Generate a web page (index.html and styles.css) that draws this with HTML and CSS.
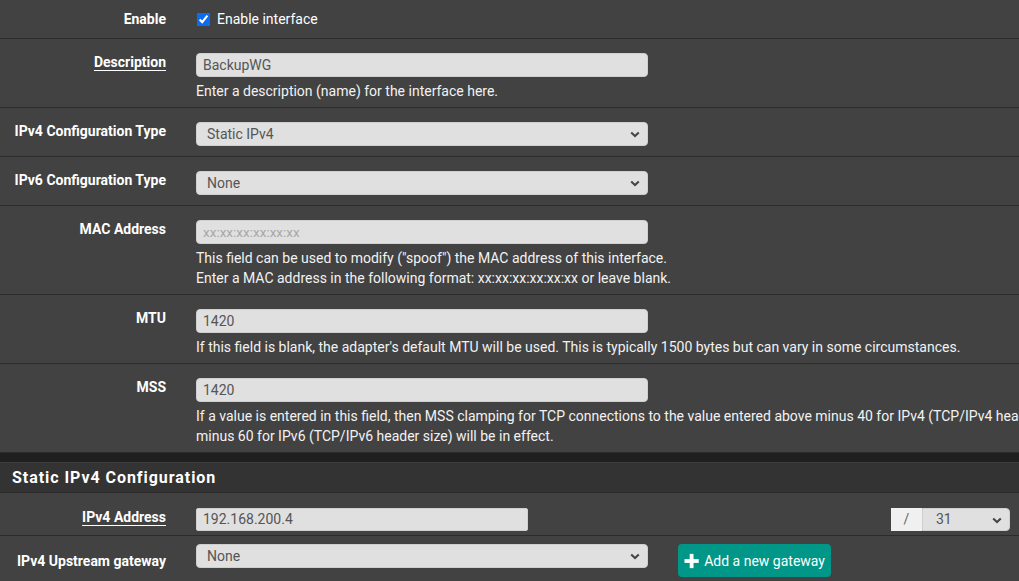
FILE: index.html
```html
<!DOCTYPE html>
<html>
<head>
<meta charset="utf-8">
<link rel="stylesheet" href="styles.css">
</head>
<body>
<div class="panel">
  <div class="row row-enable">
    <div class="lbl">Enable</div>
    <div class="ctl check-line">
      <input type="checkbox" class="chk" checked>
      <span>Enable interface</span>
    </div>
  </div>
  <div class="row">
    <div class="lbl"><span class="ul">Description</span></div>
    <div class="ctl">
      <div class="field">BackupWG</div>
      <div class="help">Enter a description (name) for the interface here.</div>
    </div>
  </div>
  <div class="row">
    <div class="lbl">IPv4 Configuration Type</div>
    <div class="ctl">
      <div class="field sel">Static IPv4
        <svg class="chev" width="10" height="7" viewBox="0 0 10 7"><path d="M1.2 1.4 L5 5 L8.8 1.4" fill="none" stroke="#444" stroke-width="2"/></svg>
      </div>
    </div>
  </div>
  <div class="row">
    <div class="lbl">IPv6 Configuration Type</div>
    <div class="ctl">
      <div class="field sel">None
        <svg class="chev" width="10" height="7" viewBox="0 0 10 7"><path d="M1.2 1.4 L5 5 L8.8 1.4" fill="none" stroke="#444" stroke-width="2"/></svg>
      </div>
    </div>
  </div>
  <div class="row">
    <div class="lbl">MAC Address</div>
    <div class="ctl">
      <div class="field placeholder">xx:xx:xx:xx:xx:xx</div>
      <div class="help">This field can be used to modify ("spoof") the MAC address of this interface.<br>Enter a MAC address in the following format: xx:xx:xx:xx:xx:xx or leave blank.</div>
    </div>
  </div>
  <div class="row">
    <div class="lbl">MTU</div>
    <div class="ctl">
      <div class="field">1420</div>
      <div class="help">If this field is blank, the adapter's default MTU will be used. This is typically 1500 bytes but can vary in some circumstances.</div>
    </div>
  </div>
  <div class="row">
    <div class="lbl">MSS</div>
    <div class="ctl">
      <div class="field">1420</div>
      <div class="help help-clip">If a value is entered in this field, then MSS clamping for TCP connections to the value entered above minus 40 for IPv4 (TCP/IPv4 header size) and<br>minus 60 for IPv6 (TCP/IPv6 header size) will be in effect.</div>
    </div>
  </div>
</div>
<div class="gap"></div>
<div class="panel">
  <div class="heading">Static IPv4 Configuration</div>
  <div class="row row-addr">
    <div class="lbl"><span class="ul">IPv4 Address</span></div>
    <div class="ctl addr-line">
      <div class="field addr">192.168.200.4</div>
      <div class="cidr">
        <div class="addon">/</div>
        <div class="field sel mask">31
          <svg class="chev" width="10" height="7" viewBox="0 0 10 7"><path d="M1.2 1.4 L5 5 L8.8 1.4" fill="none" stroke="#444" stroke-width="2"/></svg>
        </div>
      </div>
    </div>
  </div>
  <div class="row row-gw">
    <div class="lbl">IPv4 Upstream gateway</div>
    <div class="ctl gw-line">
      <div class="field sel">None
        <svg class="chev" width="10" height="7" viewBox="0 0 10 7"><path d="M1.2 1.4 L5 5 L8.8 1.4" fill="none" stroke="#444" stroke-width="2"/></svg>
      </div>
      <button class="btn"><svg width="16" height="16" viewBox="0 0 16 16"><rect x="6" y="0.5" width="4" height="15" fill="#fff"/><rect x="0.5" y="6" width="15" height="4" fill="#fff"/></svg><span>Add a new gateway</span></button>
    </div>
  </div>
</div>
</body>
</html>
```

FILE: styles.css
```css
html, body {
  margin: 0;
  padding: 0;
  background: #424242;
  overflow: hidden;
}
body {
  font-family: Roboto, "Liberation Sans", sans-serif;
  font-size: 14px;
  color: #ffffff;
  width: 1019px;
  height: 581px;
}
.panel {
  background: #424242;
}
.row {
  display: grid;
  grid-template-columns: 181px 1fr;
  padding: 14px 0 10px;
  border-bottom: 1px solid #2c2c2c;
}
.lbl {
  text-align: right;
  padding-right: 15px;
  font-weight: 700;
  line-height: 18px;
  white-space: nowrap;
}
.ul {
  text-decoration: underline;
  text-underline-offset: 3px;
}
.ctl {
  padding-left: 15px;
  min-width: 0;
}
.row-enable {
  padding: 0;
  height: 38px;
  align-items: center;
}
.check-line {
  display: flex;
  align-items: center;
  gap: 7px;
}
.chk {
  width: 13px;
  height: 13px;
  margin: 0 0 0 1px;
  accent-color: #0b6cf0;
}
.field {
  position: relative;
  width: 452px;
  height: 24px;
  box-sizing: border-box;
  background: #e0e0e0;
  border: 1px solid #cfcfcf;
  border-radius: 4px;
  color: #555;
  font-size: 14px;
  line-height: 22px;
  padding: 0 6px;
}
.sel {
  padding-left: 10px;
}
.chev {
  position: absolute;
  right: 7px;
  top: 8px;
}
.placeholder {
  color: #a8a8a8;
  font-size: 13.5px;
}
.help {
  margin-top: 4px;
  margin-bottom: -4px;
  line-height: 20px;
  white-space: nowrap;
  color: #f2f2f2;
}
.help-clip {
  overflow: hidden;
}
.gap {
  height: 9px;
  background: #1f1f1f;
}
.heading {
  height: 29px;
  line-height: 29px;
  background: #333333;
  border-top: 1px solid #3d3d3d;
  border-bottom: 1px solid #2a2a2a;
  padding-left: 12px;
  font-size: 16px;
  font-weight: 700;
  letter-spacing: 0.95px;
}
.row-addr {
  padding: 15px 0 4px;
  align-items: start;
}
.addr-line {
  display: flex;
  justify-content: space-between;
  padding-right: 9px;
}
.addr {
  width: 332px;
  height: 23px;
  line-height: 21px;
  border-radius: 2px;
}
.cidr {
  display: flex;
}
.addon {
  width: 31px;
  height: 23px;
  background: #f0f0f0;
  color: #666;
  text-align: center;
  line-height: 23px;
}
.mask {
  width: 88px;
  height: 23px;
  line-height: 21px;
  border-radius: 0 4px 4px 0;
  padding-left: 13px;
}
.row-gw {
  padding: 8px 0 4px;
  border-bottom: none;
}
.row-gw .lbl {
  padding-top: 8px;
}
.gw-line {
  display: flex;
  gap: 30px;
  align-items: flex-start;
}
.btn {
  display: flex;
  align-items: center;
  gap: 5px;
  height: 33px;
  width: 153px;
  box-sizing: border-box;
  padding: 0 6px;
  background: #009688;
  border: none;
  border-radius: 4px;
  color: #fff;
  font-family: Roboto, "Liberation Sans", sans-serif;
  font-size: 14px;
  white-space: nowrap;
}
```
